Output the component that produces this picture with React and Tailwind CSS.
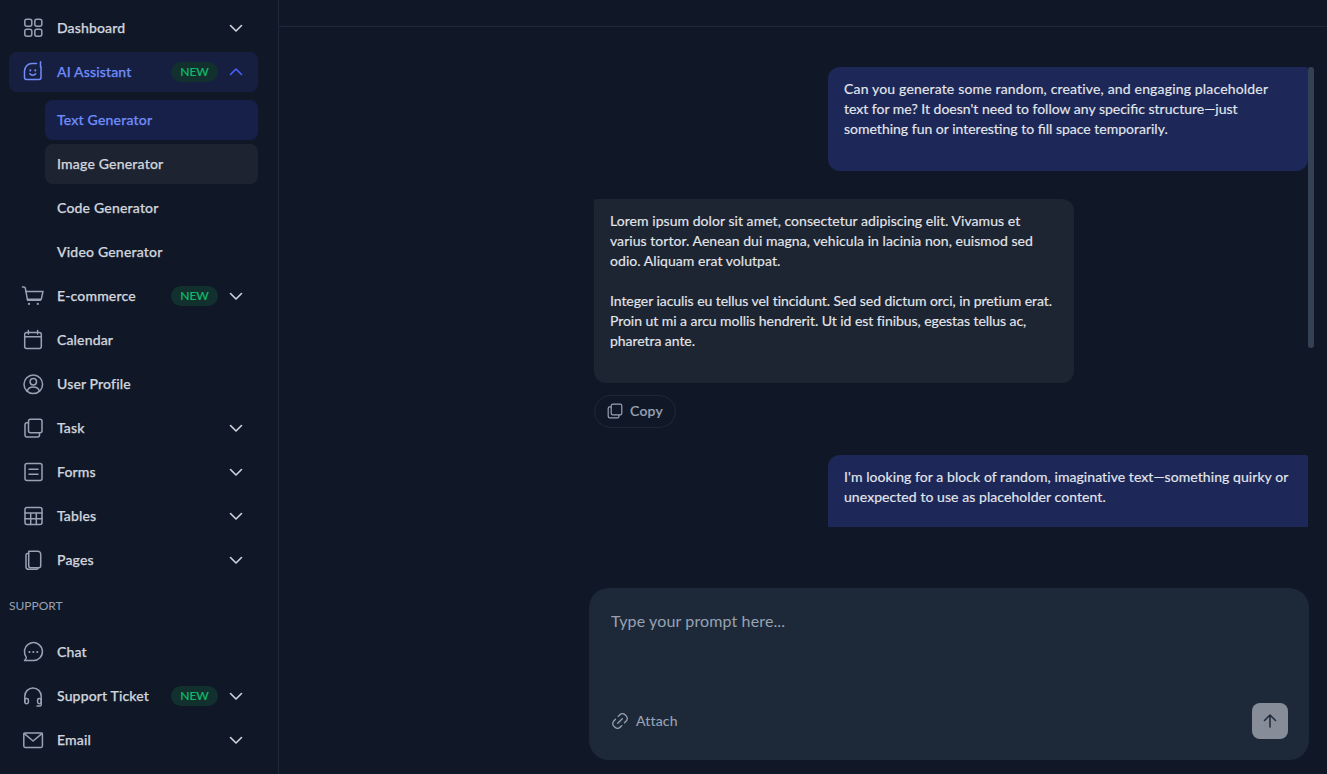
import React from "react";

const P = (props) => (
  <svg width="24" height="24" viewBox="0 0 24 24" fill="none" stroke="currentColor" strokeWidth="1.5" strokeLinecap="round" strokeLinejoin="round" className="shrink-0" {...props} />
);

const Icons = {
  dashboard: (
    <P>
      <rect x="3.8" y="3.3" width="7" height="7" rx="2" />
      <rect x="13.8" y="3.3" width="7" height="7" rx="2" />
      <rect x="3.8" y="13.3" width="7" height="7" rx="2" />
      <rect x="13.8" y="13.3" width="7" height="7" rx="2" />
    </P>
  ),
  ai: (
    <P>
      <path d="M15.5 3.5H11A7.5 7.5 0 0 0 3.5 11v6.5a2 2 0 0 0 2 2H18a2 2 0 0 0 2-2V7" />
      <path d="M19.5 1.7V7" />
      <path d="M8.8 13.8c1.5 1.9 4.4 1.9 5.9 0" />
      <path d="M9.3 10.3v.2M14.3 10.3v.2" strokeWidth="2" />
    </P>
  ),
  cart: (
    <P>
      <path d="M1.5 3h1.4a1.4 1.4 0 0 1 1.4 1.1l2.3 12.2h13" />
      <path d="M4.8 7.4H22l-1.7 7.8H6.4" />
      <path d="M8 19.8v.1M16.8 19.8v.1" strokeWidth="2.2" />
    </P>
  ),
  calendar: (
    <P>
      <rect x="3.7" y="4.5" width="16.6" height="16" rx="2" />
      <path d="M7.4 2.5v3.4M16.6 2.5v3.4M3.7 8.8h16.6" />
    </P>
  ),
  user: (
    <P>
      <circle cx="12.3" cy="12.3" r="9.3" />
      <circle cx="12.3" cy="9.8" r="3.2" />
      <path d="M6.2 19.3c.6-2.8 3-4.2 6.1-4.2s5.5 1.4 6.1 4.2" />
    </P>
  ),
  task: (
    <P>
      <rect x="7.5" y="3.2" width="13.5" height="13.5" rx="2" />
      <path d="M7.5 6.7H6a2 2 0 0 0-2 2V19a2 2 0 0 0 2 2h10.5a2 2 0 0 0 2-2v-2.3" />
    </P>
  ),
  forms: (
    <P>
      <rect x="4" y="3.5" width="17" height="17" rx="2" />
      <path d="M8 9.2h9M8 14.2h9" />
    </P>
  ),
  tables: (
    <P>
      <rect x="4" y="3.5" width="17" height="17" rx="2" />
      <path d="M4 9h17M4 14.7h17M9.7 9v11.5M15.3 9v11.5" />
    </P>
  ),
  pages: (
    <P>
      <path d="M8 3.2h8.7a3 3 0 0 1 3 3v11.5a2 2 0 0 1-2 2H9.7a2 2 0 0 1-2-2V3.5z" />
      <path d="M7.7 5.5H6.5a1.5 1.5 0 0 0-1.5 1.5v12a2.3 2.3 0 0 0 2.3 2.3h8a2 2 0 0 0 2-1.6" />
    </P>
  ),
  chat: (
    <P>
      <path d="M3.5 20.6h8.8a9 9 0 1 0-8.6-6.8c.3 1 .7 2 1.3 2.8.5.7.3 1.6-.2 2.3l-1.3 1.7z" />
      <path d="M8.4 12h.1M12.3 12h.1M16.2 12h.1" strokeWidth="2" />
    </P>
  ),
  headset: (
    <P>
      <path d="M3.8 18v-5.8a8.2 8.2 0 0 1 16.4 0V20.8a1.2 1.2 0 0 1-1.2 1.2h-3" />
      <rect x="3.8" y="14.5" width="3.6" height="5.2" rx="1.6" />
      <rect x="16.6" y="14.5" width="3.6" height="5.2" rx="1.6" />
    </P>
  ),
  mail: (
    <P>
      <rect x="2.8" y="4.9" width="18.6" height="14.6" rx="1.4" />
      <path d="M3 5.4l9.1 7.6 9.1-7.6" />
    </P>
  ),
};

const Chevron = ({ up, className }) => (
  <svg width="20" height="20" viewBox="0 0 20 20" fill="none" stroke="currentColor" strokeWidth="1.6" strokeLinecap="round" strokeLinejoin="round" className={className}>
    <path d={up ? "M4.5 12.5L10 7l5.5 5.5" : "M4.5 7.5L10 13l5.5-5.5"} />
  </svg>
);

const NewBadge = () => (
  <span className="ml-auto flex h-5 w-[47px] items-center justify-center rounded-full bg-[#11302e] text-xs font-medium text-[#12b76a] [-webkit-text-stroke:0.2px]">NEW</span>
);

const Row = ({ icon, label, badge, chevron, active }) => (
  <div className={`flex h-10 items-center rounded-lg pl-3 pr-3 ${active ? "bg-[#161f40] text-[#6f8cf8]" : "text-[#d0d5dd]"}`}>
    <span className={active ? "text-[#6f8cf8]" : "text-[#98a2b3]"}>{Icons[icon]}</span>
    <span className="ml-3 text-sm font-medium tracking-[0.15px] [-webkit-text-stroke:0.25px]">{label}</span>
    {badge && <NewBadge />}
    {chevron && (
      <Chevron up={active} className={`${badge ? "ml-2" : "ml-auto"} ${active ? "text-[#465fff]" : "text-[#d0d5dd]"}`} />
    )}
  </div>
);

const SubRow = ({ label, state }) => (
  <div
    className={`flex h-10 items-center rounded-lg px-3 text-sm font-medium tracking-[0.2px] [-webkit-text-stroke:0.25px] ${
      state === "active" ? "bg-[#162048] text-[#6f8cf8]" : state === "hover" ? "bg-[#1d2330] text-[#d0d5dd]" : "text-[#d0d5dd]"
    }`}
  >
    {label}
  </div>
);

const Sidebar = () => (
  <aside className="flex h-full w-[279px] shrink-0 flex-col overflow-hidden border-r border-[#1d2939] pl-[9px] pr-5 pt-2">
    <div className="flex flex-col gap-1">
      <Row icon="dashboard" label="Dashboard" chevron />
      <Row icon="ai" label="AI Assistant" badge chevron active />
      <div className="ml-9 mt-1 flex flex-col gap-1">
        <SubRow label="Text Generator" state="active" />
        <SubRow label="Image Generator" state="hover" />
        <SubRow label="Code Generator" />
        <SubRow label="Video Generator" />
      </div>
      <Row icon="cart" label="E-commerce" badge chevron />
      <Row icon="calendar" label="Calendar" />
      <Row icon="user" label="User Profile" />
      <Row icon="task" label="Task" chevron />
      <Row icon="forms" label="Forms" chevron />
      <Row icon="tables" label="Tables" chevron />
      <Row icon="pages" label="Pages" chevron />
    </div>
    <div className="mb-4 mt-4 h-5 text-xs uppercase leading-5 text-[#98a2b3]">Support</div>
    <div className="flex flex-col gap-1">
      <Row icon="chat" label="Chat" />
      <Row icon="headset" label="Support Ticket" badge chevron />
      <Row icon="mail" label="Email" chevron />
    </div>
  </aside>
);

const Bubble = ({ side, children, className = "" }) => (
  <div
    className={`w-[480px] whitespace-nowrap px-4 pt-3 text-sm leading-5 text-[#e4e7ec] [-webkit-text-stroke:0.15px] ${side === "me" ? "ml-auto bg-[#1d2859]" : "bg-[#1d2432]"} ${className}`}
  >
    {children}
  </div>
);

const Chat = () => (
  <div className="relative h-[500px] shrink-0 overflow-hidden pl-[315px] pr-[19px] pt-10">
    <Bubble side="me" className="h-[104px] rounded-xl rounded-tr-xs">
      <span className="tracking-[0.17px]">Can you generate some random, creative, and engaging placeholder</span><br />
      text for me? It doesn't need to follow any specific structure—just<br />
      something fun or interesting to fill space temporarily.
    </Bubble>
    <Bubble side="them" className="mt-7 h-[184px] rounded-xl rounded-tl-xs">
      <p className="tracking-[0.05px]">
        Lorem ipsum dolor sit amet, consectetur adipiscing elit. Vivamus et<br />
        varius tortor. Aenean dui magna, vehicula in lacinia non, euismod sed<br />
        odio. Aliquam erat volutpat.
      </p>
      <p className="mt-5 tracking-[-0.05px]">
        Integer iaculis eu tellus vel tincidunt. Sed sed dictum orci, in pretium erat.<br />
        Proin ut mi a arcu mollis hendrerit. Ut id est finibus, egestas tellus ac,<br />
        pharetra ante.
      </p>
    </Bubble>
    <div className="mt-3 flex h-[33px] w-[82px] items-center justify-center gap-[7px] rounded-full border border-[#1d2939] pb-px text-sm font-medium tracking-[0.2px] text-[#98a2b3] [-webkit-text-stroke:0.2px]">
      <svg width="16" height="16" viewBox="0 0 16 16" fill="none" stroke="currentColor" strokeWidth="1.2" strokeLinejoin="round">
        <rect x="4.2" y="1.2" width="10.6" height="10.6" rx="1.6" />
        <path d="M4.2 3.8H2.8a1.6 1.6 0 0 0-1.6 1.6v7.8a1.6 1.6 0 0 0 1.6 1.6h7.6a1.6 1.6 0 0 0 1.6-1.6v-1.4" />
      </svg>
      Copy
    </div>
    <Bubble side="me" className="mt-[27px] h-[104px] rounded-xl rounded-tr-xs tracking-[0.07px]">
      I'm looking for a block of random, imaginative text—something quirky or<br />
      unexpected to use as placeholder content.
    </Bubble>
    <div className="absolute right-[13px] top-10 h-[281px] w-1.5 rounded-full bg-[#344054]" />
  </div>
);

const Prompt = () => (
  <div className="ml-[310px] mt-[61px] flex h-[172px] w-[720px] shrink-0 flex-col rounded-[20px] bg-[#1d2939] pb-[21px] pl-[22px] pr-[21px] pt-[23px]">
    <div className="text-base leading-5 tracking-[0.13px] text-[#98a2b3]">Type your prompt here...</div>
    <div className="mt-auto flex items-center justify-between">
      <div className="flex items-center gap-[7px] text-sm font-medium tracking-[0.15px] text-[#98a2b3]">
        <svg width="18" height="18" viewBox="0 0 18 18" fill="none" stroke="currentColor" strokeWidth="1.3" strokeLinecap="round">
          <path d="M7.2 4.4l1.7-1.7a3.6 3.6 0 0 1 5.1 0l1.2 1.2a3.6 3.6 0 0 1 0 5.1l-1.7 1.7" />
          <path d="M10.8 13.6l-1.7 1.7a3.6 3.6 0 0 1-5.1 0l-1.2-1.2a3.6 3.6 0 0 1 0-5.1l1.7-1.7" />
          <path d="M11.3 6.7l-4.6 4.6" />
        </svg>
        Attach
      </div>
      <div className="flex h-9 w-9 items-center justify-center rounded-lg bg-[#868d98] text-[#1d2939]">
        <svg width="20" height="20" viewBox="0 0 20 20" fill="none" stroke="currentColor" strokeWidth="1.5" strokeLinecap="round" strokeLinejoin="round">
          <path d="M10 16V4.5M4.5 9.5L10 4l5.5 5.5" />
        </svg>
      </div>
    </div>
  </div>
);

export default function App() {
  return (
    <div className="flex h-[774px] w-[1327px] overflow-hidden bg-[#101828] font-['Lato','Noto_Sans',sans-serif]">
      <Sidebar />
      <main className="flex min-w-0 flex-1 flex-col">
        <div className="h-[27px] shrink-0 border-b border-[#1d2939]" />
        <Chat />
        <Prompt />
      </main>
    </div>
  );
}
